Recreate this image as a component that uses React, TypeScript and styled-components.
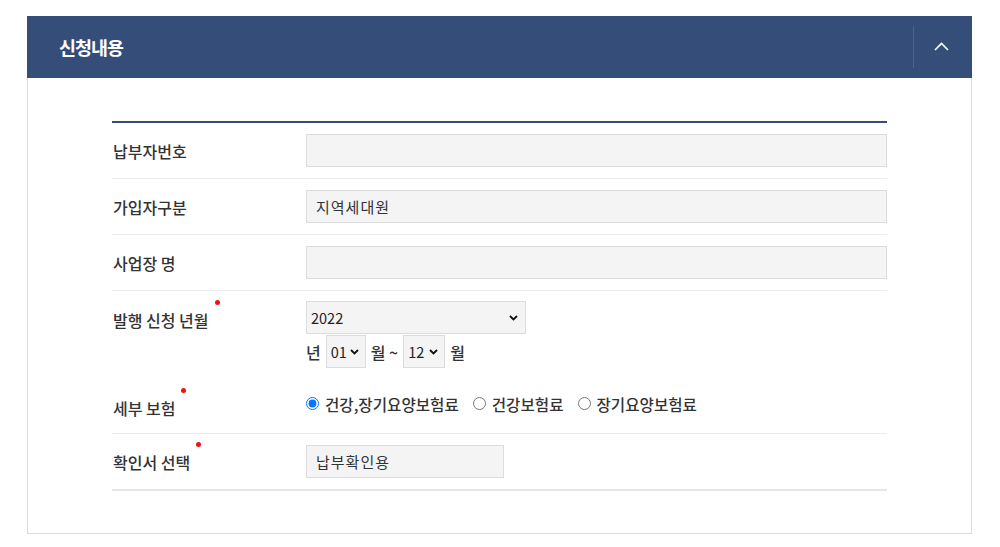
import React, { useState } from 'react'
import styled, { createGlobalStyle } from 'styled-components'

const GlobalStyle = createGlobalStyle`
  html, body {
    margin: 0;
    padding: 0;
    background: #fff;
  }
  body {
    font-family: 'Noto Sans CJK KR', 'Malgun Gothic', sans-serif;
    color: #333;
  }
`

const Page = styled.div`
  padding: 16px 28px 0 27px;
`

const Panel = styled.section`
  width: 100%;
`

const PanelHeader = styled.header`
  display: flex;
  align-items: center;
  height: 62px;
  background: #344d79;
`

const PanelTitle = styled.h2`
  flex: 1;
  margin: 0;
  padding-left: 32px;
  font-size: 18.5px;
  font-weight: 700;
  line-height: 24px;
  letter-spacing: -1px;
  color: #fff;
`

const ToggleButton = styled.button`
  display: flex;
  align-items: center;
  justify-content: center;
  box-sizing: border-box;
  width: 59px;
  height: 42px;
  padding: 0 4px 2px 0;
  background: transparent;
  border: 0;
  border-left: 1px solid #4b6391;
  cursor: pointer;
`

const PanelBody = styled.div`
  padding: 43px 84px 42px;
  border: 1px solid #dcdcdc;
  border-top: 0;
`

const FormTable = styled.div`
  border-top: 2px solid #344d79;
  border-bottom: 2px solid #e6e6e6;
`

const Row = styled.div<{ $noLine?: boolean; $tall?: boolean }>`
  display: grid;
  grid-template-columns: 194px 1fr;
  align-items: ${p => (p.$tall ? 'start' : 'center')};
  height: ${p => (p.$tall ? '87px' : '56px')};
  padding: ${p => (p.$tall ? '10px 0 0' : '0')};
  border-bottom: ${p => (p.$noLine ? '0' : '1px solid #ececec')};
  box-sizing: border-box;

  &:last-child {
    height: 55px;
    border-bottom: 0;
  }
`

const Label = styled.div<{ $required?: boolean; $offset?: number }>`
  padding-left: 1px;
  padding-top: ${p => p.$offset || 0}px;
  font-size: 16px;
  font-weight: 500;
  line-height: 20px;
  color: #333;

  span {
    position: relative;
  }

  span::after {
    content: '';
    display: ${p => (p.$required ? 'block' : 'none')};
    position: absolute;
    top: -8px;
    right: -11px;
    width: 5px;
    height: 5px;
    border-radius: 50%;
    background: #ee1111;
  }
`

const TextField = styled.input<{ $width?: number }>`
  box-sizing: border-box;
  width: ${p => (p.$width ? `${p.$width}px` : '100%')};
  height: 33px;
  padding: 0 9px;
  border: 1px solid #dcdcdc;
  background: #f4f4f4;
  font-family: 'Noto Sans CJK KR', sans-serif;
  font-size: 15px;
  letter-spacing: 1px;
  color: #333;
  outline: none;
`

const Stack = styled.div`
  display: flex;
  flex-direction: column;
  align-items: flex-start;
  gap: 1px;
`

const SelectBox = styled.div<{ $width: number }>`
  position: relative;
  width: ${p => p.$width}px;
  height: 33px;

  svg {
    position: absolute;
    top: 50%;
    right: ${p => (p.$width > 100 ? '8px' : '7px')};
    margin-top: -3px;
    pointer-events: none;
  }
`

const Select = styled.select`
  appearance: none;
  box-sizing: border-box;
  width: 100%;
  height: 100%;
  padding: 0 18px 0 4px;
  border: 1px solid #dcdcdc;
  border-radius: 0;
  background: #f4f4f4;
  font-family: 'Noto Sans CJK KR', sans-serif;
  font-size: 14.5px;
  color: #222;
  outline: none;
`

const PeriodLine = styled.div`
  display: flex;
  align-items: center;
  gap: 5px;
  font-size: 16px;
  font-weight: 500;
  color: #333;
`

const RadioGroup = styled.div`
  display: flex;
  align-items: center;
  gap: 14px;
  margin-bottom: 4px;
`

const RadioLabel = styled.label`
  display: flex;
  align-items: center;
  gap: 6px;
  font-size: 15.6px;
  font-weight: 500;
  color: #333;
  cursor: pointer;

  input {
    width: 13px;
    height: 13px;
    margin: 0;
  }
`

const ChevronUp = () => (
  <svg width="15" height="9" viewBox="0 0 15 9" fill="none">
    <path d="M1 8 L7.5 1.5 L14 8" stroke="#fff" strokeWidth="1.7" />
  </svg>
)

const ChevronDown = () => (
  <svg width="9" height="6" viewBox="0 0 9 6" fill="none">
    <path d="M1 1 L4.5 4.5 L8 1" stroke="#111" strokeWidth="1.8" />
  </svg>
)

const Dropdown = ({ width, value, options }: { width: number; value: string; options: string[] }) => (
  <SelectBox $width={width}>
    <Select defaultValue={value}>
      {options.map(o => <option key={o}>{o}</option>)}
    </Select>
    <ChevronDown />
  </SelectBox>
)

const months = Array.from({ length: 12 }, (_, i) => String(i + 1).padStart(2, '0'))

export default function App() {
  const [coverage, setCoverage] = useState('all')

  return (
    <Page>
      <GlobalStyle />
      <Panel>
        <PanelHeader>
          <PanelTitle>신청내용</PanelTitle>
          <ToggleButton aria-label="접기">
            <ChevronUp />
          </ToggleButton>
        </PanelHeader>
        <PanelBody>
          <FormTable>
            <Row>
              <Label><span>납부자번호</span></Label>
              <TextField readOnly defaultValue="" />
            </Row>
            <Row>
              <Label><span>가입자구분</span></Label>
              <TextField readOnly defaultValue="지역세대원" />
            </Row>
            <Row>
              <Label><span>사업장 명</span></Label>
              <TextField readOnly defaultValue="" />
            </Row>
            <Row $tall $noLine>
              <Label $required $offset={9}><span>발행 신청 년월</span></Label>
              <Stack>
                <Dropdown width={220} value="2022" options={['2022', '2021', '2020']} />
                <PeriodLine>
                  년
                  <Dropdown width={40} value="01" options={months} />
                  월 ~
                  <Dropdown width={42} value="12" options={months} />
                  월
                </PeriodLine>
              </Stack>
            </Row>
            <Row>
              <Label $required $offset={4}><span>세부 보험</span></Label>
              <RadioGroup>
                <RadioLabel>
                  <input type="radio" name="cov" checked={coverage === 'all'} onChange={() => setCoverage('all')} />
                  건강,장기요양보험료
                </RadioLabel>
                <RadioLabel>
                  <input type="radio" name="cov" checked={coverage === 'health'} onChange={() => setCoverage('health')} />
                  건강보험료
                </RadioLabel>
                <RadioLabel>
                  <input type="radio" name="cov" checked={coverage === 'care'} onChange={() => setCoverage('care')} />
                  장기요양보험료
                </RadioLabel>
              </RadioGroup>
            </Row>
            <Row>
              <Label $required><span>확인서 선택</span></Label>
              <TextField readOnly $width={198} defaultValue="납부확인용" />
            </Row>
          </FormTable>
        </PanelBody>
      </Panel>
    </Page>
  )
}
